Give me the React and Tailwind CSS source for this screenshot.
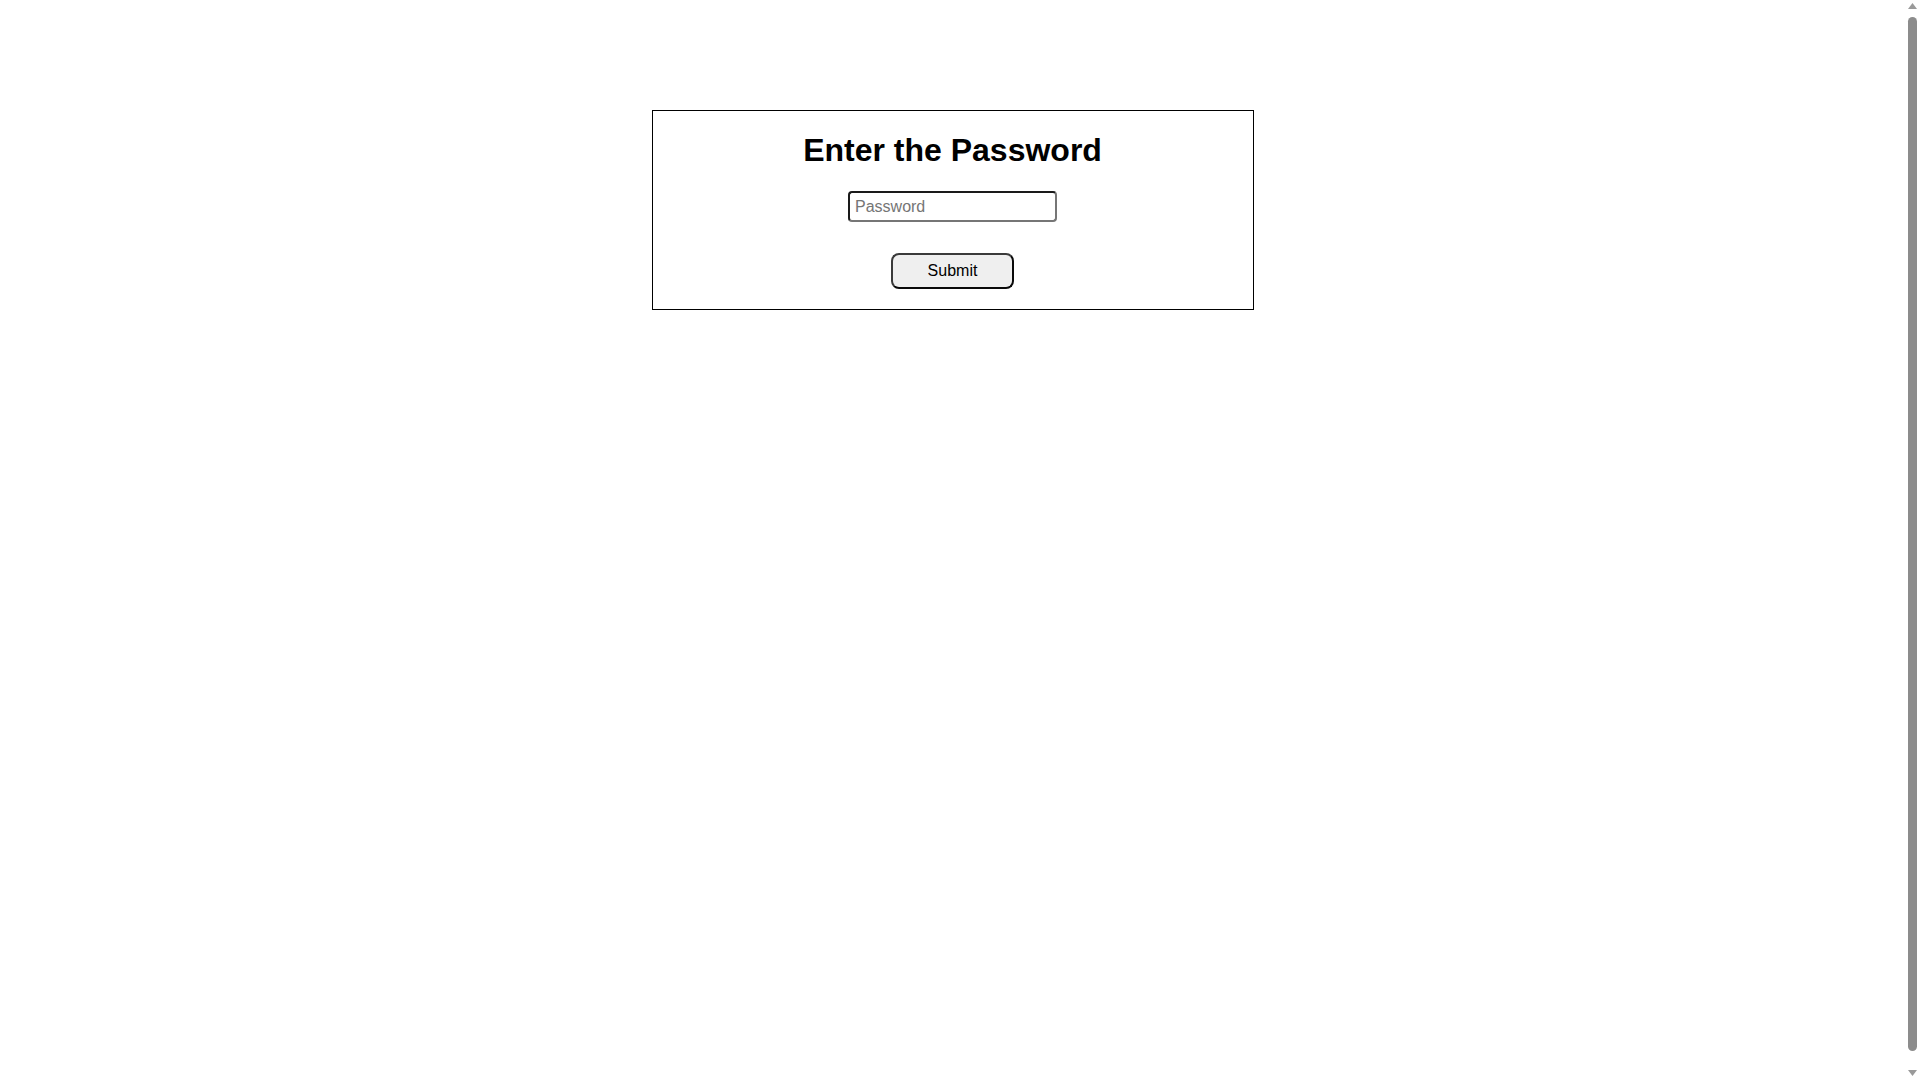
// Password gate — plain centered box with a field and a submit button.

function Scrollbar() {
  return (
    <div className="fixed top-0 right-0 w-[15px] h-screen bg-white" aria-hidden>
      <svg className="absolute top-[3px] left-[3px]" width="9" height="6" viewBox="0 0 9 6">
        <path d="M4.5 0L9 6H0Z" fill="#9a9a9a" />
      </svg>
      <div className="absolute top-[17px] bottom-[29px] left-[3px] w-[9px] rounded-full bg-[#8c8c8c]" />
      <svg className="absolute bottom-[4px] left-[3px]" width="9" height="6" viewBox="0 0 9 6">
        <path d="M0 0H9L4.5 6Z" fill="#9a9a9a" />
      </svg>
    </div>
  );
}

export default function App() {
  return (
    <div className="min-h-[1100px] pr-[15px] bg-white font-['Liberation_Sans',Arial,sans-serif] text-black">
      <div className="pt-[110px] flex justify-center">
        <form
          className="w-[602px] border border-black px-5 pt-[21px] pb-5 flex flex-col items-center"
          onSubmit={(e) => e.preventDefault()}
        >
          <h1 className="text-[32px] leading-[37px] font-bold">Enter the Password</h1>
          <input
            type="password"
            placeholder="Password"
            className="mt-[22px] w-[209px] h-[31px] px-[5px] text-[16px] rounded-[4px] border-2 border-t-[#1a1a1a] border-l-[#1a1a1a] border-b-[#767676] border-r-[#767676] placeholder:text-[#757575] outline-none bg-white"
          />
          <button
            type="submit"
            className="mt-[31px] w-[123px] h-[36px] text-[16px] bg-[#efefef] rounded-[8px] border-2 border-t-[#3a3a3a] border-l-[#3a3a3a] border-b-[#0a0a0a] border-r-[#0a0a0a]"
          >
            Submit
          </button>
        </form>
      </div>
      <Scrollbar />
    </div>
  );
}
